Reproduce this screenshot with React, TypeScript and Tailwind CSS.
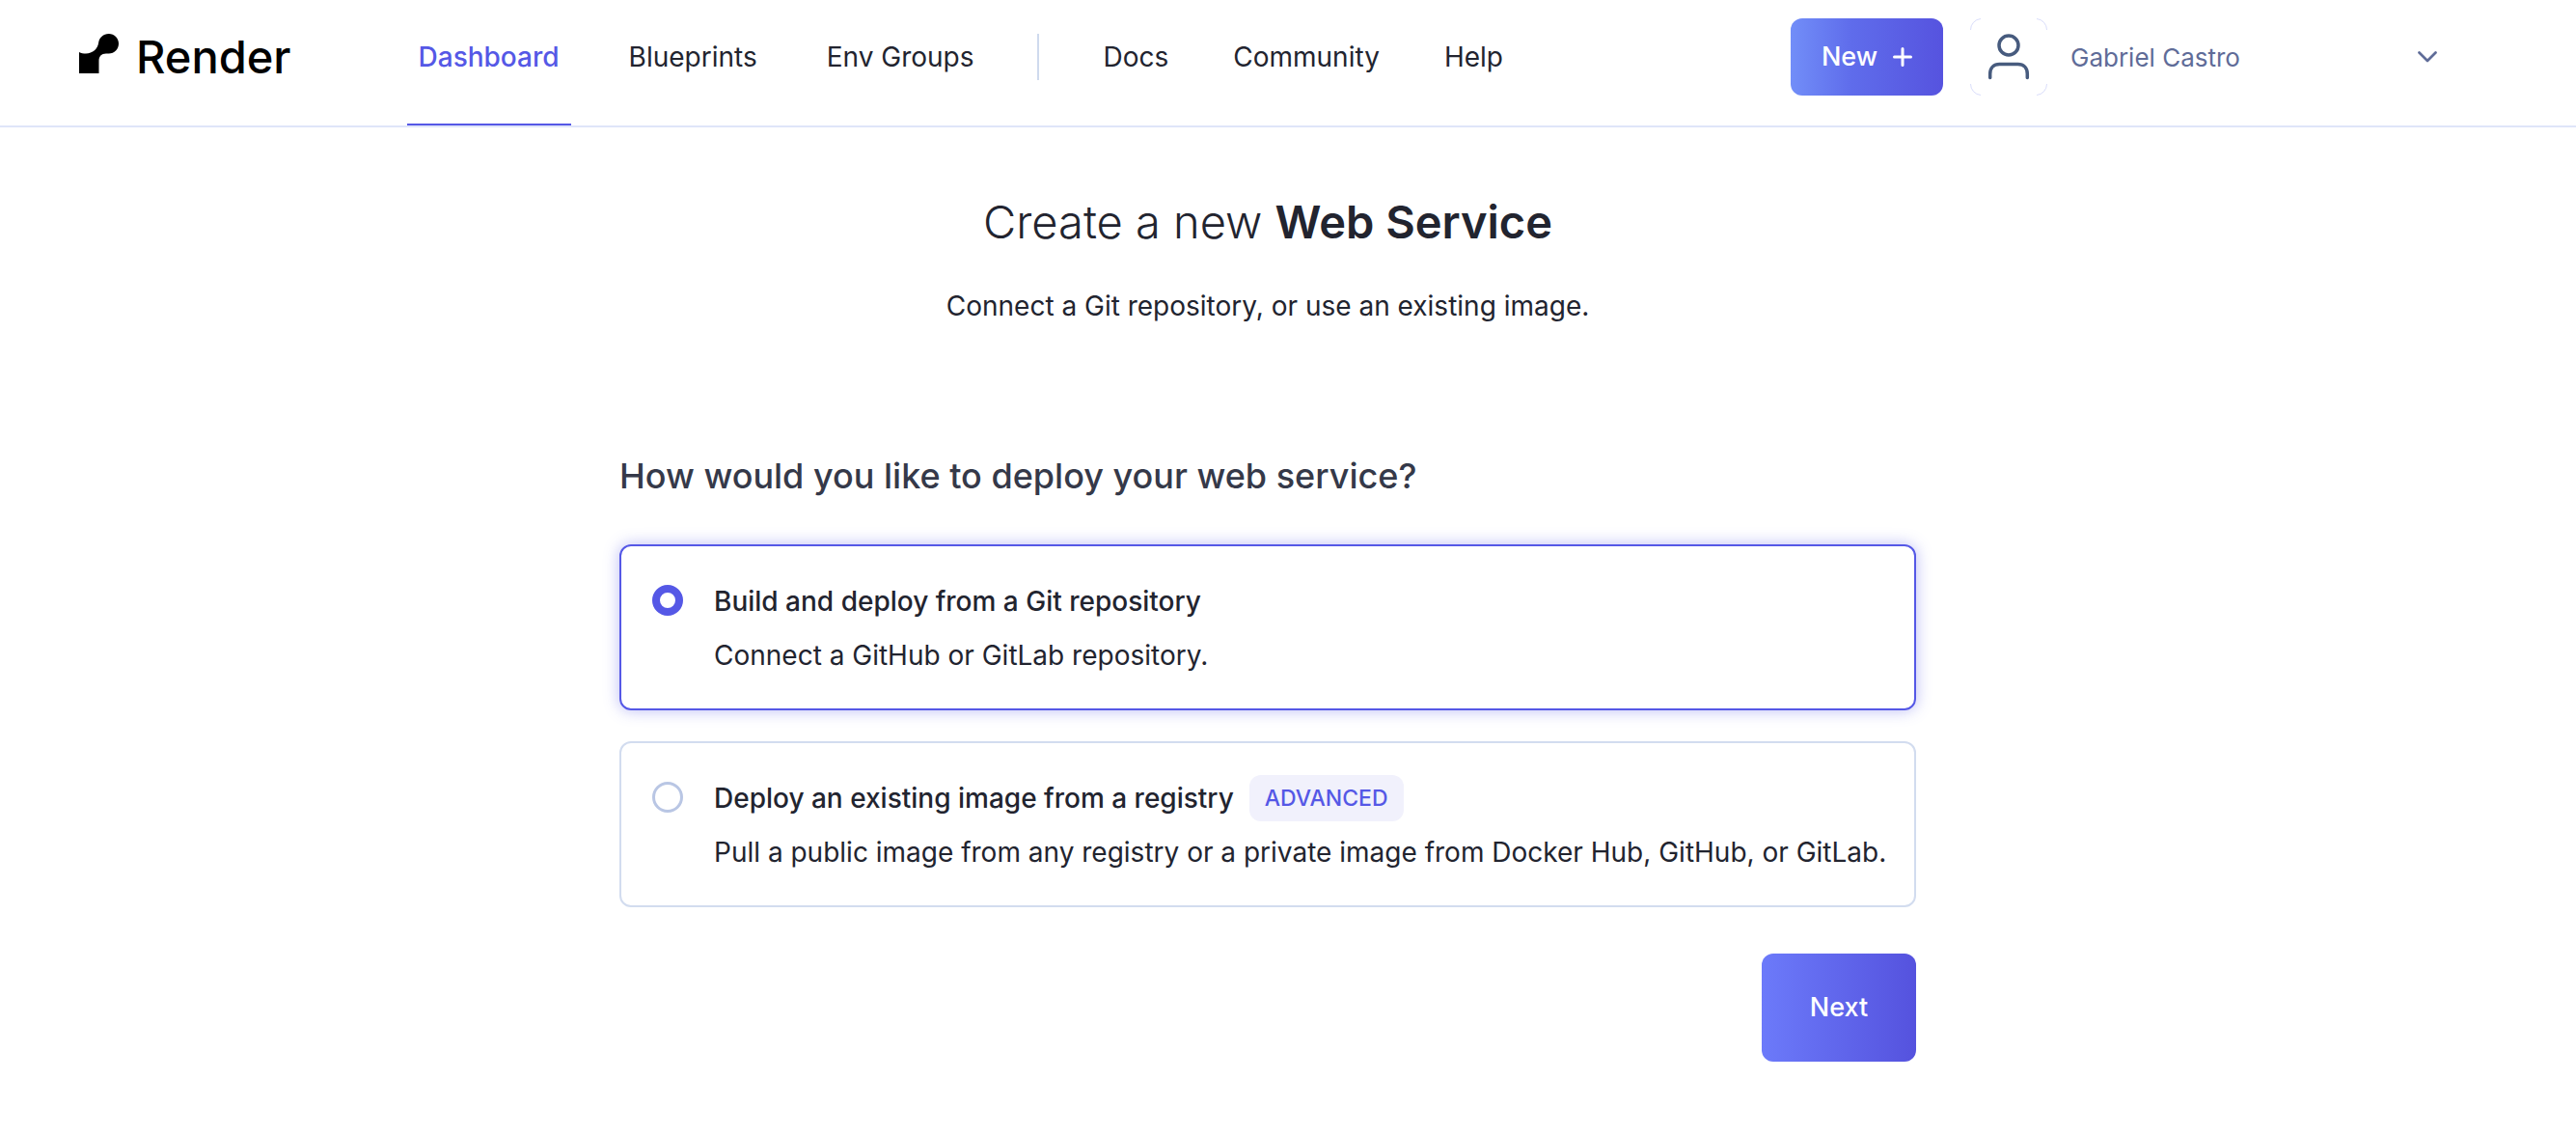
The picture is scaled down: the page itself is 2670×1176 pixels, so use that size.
import { useState } from "react";

const primaryLinks = ["Blueprints", "Env Groups"];
const secondaryLinks = ["Docs", "Community", "Help"];

const options = [
  {
    id: "git",
    title: "Build and deploy from a Git repository",
    description: "Connect a GitHub or GitLab repository.",
    badge: null,
  },
  {
    id: "image",
    title: "Deploy an existing image from a registry",
    description:
      "Pull a public image from any registry or a private image from Docker Hub, GitHub, or GitLab.",
    badge: "ADVANCED",
  },
];

function NavLink({ label, active = false }: { label: string; active?: boolean }) {
  return (
    <a
      href="#"
      aria-current={active ? "page" : undefined}
      className={
        active
          ? "flex items-center whitespace-nowrap border-b-2 border-[#5558e6] px-3 pb-[10px] text-[28px] font-medium text-[#5558e6]"
          : "flex items-center whitespace-nowrap border-b-2 border-transparent px-3 pb-[10px] text-[28px] text-[#22242f]"
      }
    >
      {label}
    </a>
  );
}

function Logo() {
  return (
    <a href="#" aria-label="Render" className="flex items-center pb-3 text-black">
      <span className="flex items-baseline gap-[18px]">
        <svg width="41" height="41" viewBox="0 0 41 41" fill="currentColor" aria-hidden="true">
          <path d="M0 19C2 20 4.500 20.500 7 20.500C14 20.500 19.500 15.500 20.200 9C20.800 4 25.200 0 30.700 0C36.500 0 41 4.500 41 10.200C41 16 36.500 20.500 30.800 20.500H28C23 20.500 20.500 23.500 20.500 28V41H0Z" />
        </svg>
        <span className="text-[47px] leading-[56px] font-medium">Render</span>
      </span>
    </a>
  );
}

function Header() {
  return (
    <header className="flex h-[132px] items-stretch border-b-2 border-[#dfe5f9] pr-[144px] pl-[82px]">
      <Logo />
      <nav className="ml-[120px] flex items-stretch">
        <div className="flex items-stretch gap-12">
          <NavLink label="Dashboard" active />
          {primaryLinks.map((label) => (
            <NavLink key={label} label={label} />
          ))}
        </div>
        <div className="flex items-center px-[54px] pb-3">
          <span className="h-12 w-[2px] bg-[#cfdaee]" />
        </div>
        <div className="flex items-stretch gap-[43px]">
          {secondaryLinks.map((label) => (
            <NavLink key={label} label={label} />
          ))}
        </div>
      </nav>
      <div className="ml-auto flex items-center pb-3">
        <button
          type="button"
          className="flex h-20 w-[158px] items-center justify-center gap-4 rounded-xl bg-linear-to-r from-[#728ef8] via-[#5f6ceb] via-40% to-[#5653df] text-[27px] font-medium text-white"
        >
          New
          <svg width="20" height="20" viewBox="0 0 20 20" fill="none" stroke="currentColor" strokeWidth="3" strokeLinecap="round" aria-hidden="true">
            <path d="M10 1.500V18.500M1.500 10H18.500" />
          </svg>
        </button>
        <svg width="80" height="80" viewBox="0 0 80 80" fill="none" className="ml-7" aria-hidden="true">
          <path
            d="M.5 12A11.500 11.500 0 0 1 11 .5M69 .5A11.500 11.500 0 0 1 79.500 12M79.500 68A11.500 11.500 0 0 1 69 79.500M11 79.500A11.500 11.500 0 0 1 .5 68"
            stroke="#d9ddfa"
          />
          <g stroke="#475b7e" strokeWidth="3.500" strokeLinecap="round">
            <circle cx="40" cy="28" r="10" />
            <path d="M20.700 61.500V57.500C20.700 51.500 24.500 47.500 30.500 47.500H49.500C55.500 47.500 59.300 51.500 59.300 57.500V61.500" />
          </g>
        </svg>
        <button
          type="button"
          className="ml-6 flex w-[380px] items-center justify-between text-[26px] text-[#5f6c98]"
        >
          Gabriel Castro
          <svg width="20" height="12" viewBox="0 0 20 12" fill="none" stroke="currentColor" strokeWidth="2.700" strokeLinecap="round" strokeLinejoin="round" aria-hidden="true">
            <path d="M1.500 1.500L10 10L18.500 1.500" />
          </svg>
        </button>
      </div>
    </header>
  );
}

export default function App() {
  const [selected, setSelected] = useState("git");

  return (
    <div className="min-h-screen bg-white font-['Inter',sans-serif] text-[#22242f]">
      <Header />
      <main className="pt-[70px] pr-[42px] pb-[76px]">
        <h1 className="text-center text-[47px] leading-[56px] font-light">
          Create a new <span className="font-semibold">Web Service</span>
        </h1>
        <p className="mt-[39px] text-center text-[28px] leading-[40px]">
          Connect a Git repository, or use an existing image.
        </p>

        <form className="mx-auto mt-[132px] max-w-[1344px]" onSubmit={(e) => e.preventDefault()}>
          <h2 className="text-[36px] leading-[48px] font-medium text-[#353949]">
            How would you like to deploy your web service?
          </h2>
          <div className="mt-[47px] flex flex-col gap-8">
            {options.map((option) => (
              <label
                key={option.id}
                htmlFor={option.id}
                className="flex gap-8 rounded-xl border-2 border-[#d2dcef] pt-[33px] pr-6 pb-[35px] pl-8 has-checked:border-[#5558e6] has-checked:shadow-[0_0_16px_rgba(85,88,230,0.4)]"
              >
                <input
                  id={option.id}
                  type="radio"
                  name="source"
                  checked={selected === option.id}
                  onChange={() => setSelected(option.id)}
                  className="mt-[7px] size-8 shrink-0 appearance-none rounded-full border-[3px] border-[#b9c6e4] bg-white checked:border-8 checked:border-[#5558e6]"
                />
                <span className="flex flex-col gap-3">
                  <span className="flex h-12 items-center gap-4">
                    <span className="text-[28px] leading-[40px] font-medium">{option.title}</span>
                    {option.badge && (
                      <span className="flex h-12 items-center rounded-xl bg-[#f1f1fc] px-4 text-[23px] font-medium text-[#5558e6]">
                        {option.badge}
                      </span>
                    )}
                  </span>
                  <span className="text-[28px] leading-[40px]">{option.description}</span>
                </span>
              </label>
            ))}
          </div>
          <div className="mt-12 flex justify-end">
            <button
              type="submit"
              className="h-28 w-40 rounded-xl bg-linear-to-r from-[#6c7afa] to-[#5552de] text-[27px] font-medium text-white"
            >
              Next
            </button>
          </div>
        </form>
      </main>
    </div>
  );
}
